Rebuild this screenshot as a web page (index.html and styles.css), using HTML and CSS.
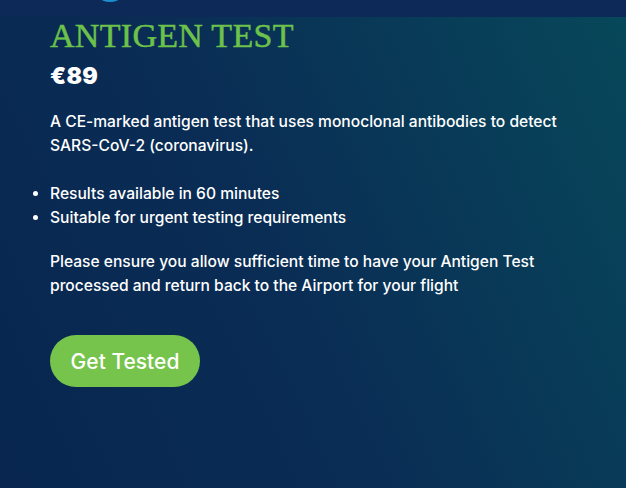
FILE: index.html
```html
<!DOCTYPE html>
<html lang="en">
<head>
<meta charset="utf-8">
<link rel="stylesheet" href="styles.css">
</head>
<body>
<header class="topbar"><span class="logo-dot"></span></header>
<main class="product">
  <h1 class="title">ANTIGEN TEST</h1>
  <p class="price">€89</p>
  <p class="desc">A CE-marked antigen test that uses monoclonal antibodies to detect SARS-CoV-2 (coronavirus).</p>
  <ul class="features">
    <li>Results available in 60 minutes</li>
    <li>Suitable for urgent testing requirements</li>
  </ul>
  <p class="desc">Please ensure you allow sufficient time to have your Antigen Test processed and return back to the Airport for your flight</p>
  <a class="cta" href="#">Get Tested</a>
</main>
</body>
</html>
```
FILE: styles.css
```css
html, body {
  margin: 0;
  padding: 0;
  height: 100%;
}
body {
  width: 626px;
  height: 488px;
  overflow: hidden;
  font-family: "Inter", "Open Sans", sans-serif;
  color: #ffffff;
  background: linear-gradient(65deg, #08264f 0%, #0a2d55 45%, #07485a 100%);
}
.topbar {
  position: relative;
  height: 17px;
  background: #0d2957;
  overflow: hidden;
}
.logo-dot {
  position: absolute;
  left: 92px;
  top: -34px;
  width: 36px;
  height: 36px;
  border-radius: 50%;
  background: #1c8fd0;
}
.product {
  padding: 0 50px;
}
.title {
  margin: 0;
  padding-top: 1px;
  font-family: "Liberation Serif", serif;
  font-weight: 400;
  font-size: 34px;
  line-height: 36px;
  color: #6cc24a;
  letter-spacing: 0.3px;
  -webkit-text-stroke: 0.5px #6cc24a;
}
.price {
  margin: 10px 0 0;
  font-family: "Inter", sans-serif;
  font-weight: 900;
  font-size: 23px;
  line-height: 24px;
  letter-spacing: 0.3px;
}
.desc {
  margin: 22px 0 0;
  font-size: 15.6px;
  line-height: 24px;
  font-weight: 500;
}
.features {
  margin: 24px 0 0;
  padding-left: 0;
  list-style: disc;
  list-style-position: outside;
  font-size: 15.6px;
  line-height: 24px;
  font-weight: 500;
}
.features + .desc {
  margin-top: 20px;
}
.cta {
  display: inline-flex;
  align-items: center;
  justify-content: center;
  margin-top: 37px;
  width: 150px;
  height: 52px;
  border-radius: 26px;
  background: #76c44b;
  color: #ffffff;
  text-decoration: none;
  font-size: 21px;
  font-weight: 500;
}
```
